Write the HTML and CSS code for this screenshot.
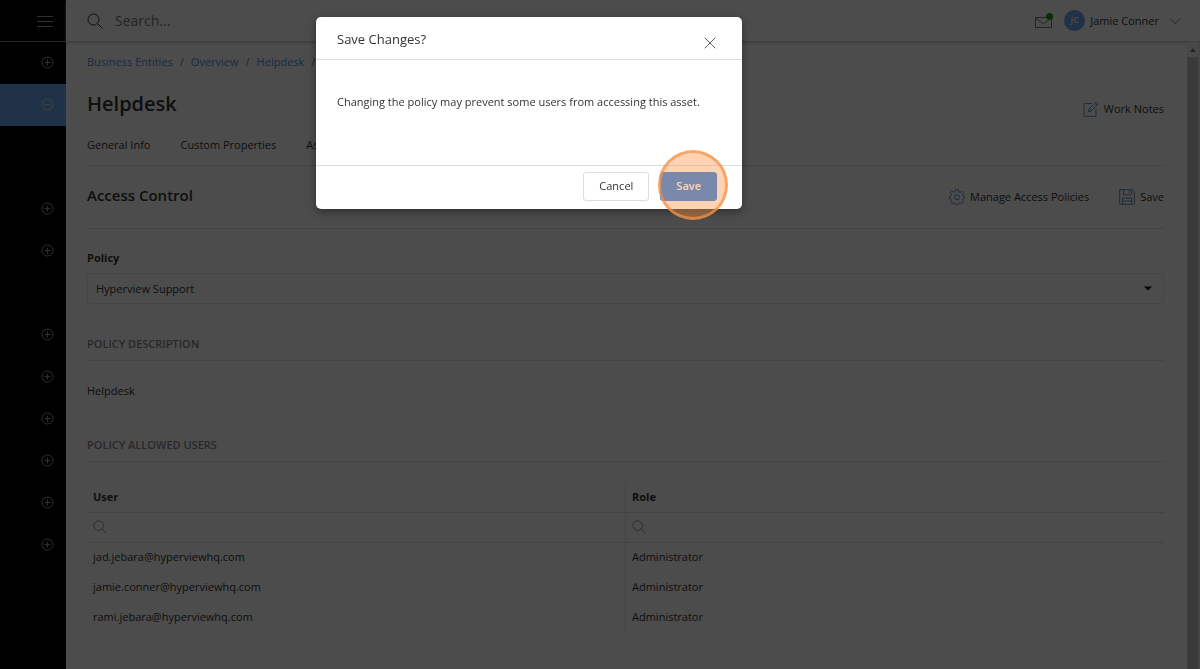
FILE: index.html
```html
<!DOCTYPE html>
<html lang="en">
<head>
<meta charset="utf-8">
<meta name="viewport" content="width=device-width, initial-scale=1">
<title>Helpdesk</title>
<link rel="stylesheet" href="styles.css">
</head>
<body>
<svg class="defs" aria-hidden="true">
  <symbol id="plus" viewBox="0 0 14 14"><circle cx="7.500" cy="6.500" r="5.500"/><path d="M7.500 3.500v6M4.500 6.500h6"/></symbol>
  <symbol id="minus" viewBox="0 0 14 14"><circle cx="7.500" cy="6.500" r="5.500"/><path d="M4.500 6.500h6"/></symbol>
  <symbol id="search" viewBox="0 0 16 16"><circle cx="6.5" cy="6.5" r="5.5"/><path d="M10.500 10.500L15.300 15.300"/></symbol>
</svg>
<div class="app">
  <nav class="sidebar" aria-label="Main">
    <button class="menu" aria-label="Menu"><svg width="16" height="14" viewBox="0 0 16 14"><path d="M0 2.500h16M0 7.500h16M0 12.500h16"/></svg></button>
    <button class="item" aria-label="Expand"><svg class="ring"><use href="#plus"/></svg></button>
    <button class="item active" aria-label="Collapse"><svg class="ring"><use href="#minus"/></svg></button>
    <div class="submenu"></div>
    <button class="item" aria-label="Expand"><svg class="ring"><use href="#plus"/></svg></button>
    <button class="item" aria-label="Expand"><svg class="ring"><use href="#plus"/></svg></button>
    <div class="spacer"></div>
    <button class="item" aria-label="Expand"><svg class="ring"><use href="#plus"/></svg></button>
    <button class="item" aria-label="Expand"><svg class="ring"><use href="#plus"/></svg></button>
    <button class="item" aria-label="Expand"><svg class="ring"><use href="#plus"/></svg></button>
    <button class="item" aria-label="Expand"><svg class="ring"><use href="#plus"/></svg></button>
    <button class="item" aria-label="Expand"><svg class="ring"><use href="#plus"/></svg></button>
    <button class="item" aria-label="Expand"><svg class="ring"><use href="#plus"/></svg></button>
  </nav>
  <div class="page">
    <header class="topbar">
      <svg class="search-icon"><use href="#search"/></svg>
      <input class="search" type="text" placeholder="Search..." aria-label="Search">
      <button class="mail" aria-label="Messages"><svg width="18" height="16" viewBox="0 0 18 16"><path d="M.5 4.500h16v10H.5zM.5 5l8 6 8-6"/><circle cx="14.500" cy="3.500" r="3.500"/></svg></button>
      <button class="account"><span class="avatar">JC</span><span>Jamie Conner</span><svg width="12" height="8" viewBox="0 0 12 8"><path d="M1 1.500l5 5 5-5"/></svg></button>
    </header>
    <div class="view">
      <main class="content">
        <nav class="crumbs" aria-label="Breadcrumb"><a href="#">Business Entities</a><span>/</span><a href="#">Overview</a><span>/</span><a href="#">Helpdesk</a><span>/</span></nav>
        <div class="title-row">
          <h1>Helpdesk</h1>
          <button class="action"><svg width="16" height="16" viewBox="0 0 16 16"><path d="M9 2.500H1v12.800h12V8M5.500 10.800l.8-3L13.300.8l2 2-7 7zM11.800 2.300l2 2M6.300 7.800l2 2"/></svg>Work Notes</button>
        </div>
        <nav class="tabs" aria-label="Sections"><a href="#">General Info</a><a href="#">Custom Properties</a><a href="#">Assets</a></nav>
        <div class="section-row">
          <h2>Access Control</h2>
          <div class="actions">
            <button class="action"><svg width="16" height="16" viewBox="0 0 16 16"><path d="M6.700 .8h2.600l.4 2 1.400.6 1.700-1.200 1.800 1.800-1.200 1.700.6 1.400 1.400.3v2.200l-1.500.4-.6 1.400 1.200 1.700-1.800 1.800-1.700-1.200-1.400.6-.3 1.400H6.700l-.4-1.500-1.400-.6-1.700 1.200-1.800-1.800 1.200-1.700L2 9.900.6 9.600V7.200L2 6.900l.6-1.400L1.400 3.800l1.800-1.800 1.700 1.200 1.400-.6z"/><circle cx="8" cy="8.300" r="2.500"/></svg>Manage Access Policies</button>
            <button class="action"><svg width="16" height="16" viewBox="0 0 16 16"><path d="M.7.700h12.600l2 2v12.600H.7zM4.500.700v5h8v-5M10 2v2M3.500 15.300V9h9v6.300M3.500 12h9"/></svg>Save</button>
          </div>
        </div>
        <label class="field-label" for="policy">Policy</label>
        <div class="select-wrap">
          <select id="policy"><option>Hyperview Support</option></select>
          <svg class="caret" width="8" height="5" viewBox="0 0 8 5"><path d="M0 .5h8L4 4.500z"/></svg>
        </div>
        <h3>POLICY DESCRIPTION</h3>
        <p class="description">Helpdesk</p>
        <h3>POLICY ALLOWED USERS</h3>
        <table>
          <thead>
            <tr><th scope="col">User</th><th scope="col">Role</th></tr>
            <tr class="filters">
              <td><div class="filter"><svg><use href="#search"/></svg><input type="text" aria-label="Filter users"></div></td>
              <td><div class="filter"><svg><use href="#search"/></svg><input type="text" aria-label="Filter roles"></div></td>
            </tr>
          </thead>
          <tbody>
            <tr><td>jad.jebara@hyperviewhq.com</td><td>Administrator</td></tr>
            <tr><td>jamie.conner@hyperviewhq.com</td><td>Administrator</td></tr>
            <tr><td>rami.jebara@hyperviewhq.com</td><td>Administrator</td></tr>
          </tbody>
        </table>
      </main>
      <div class="scrollbar" aria-hidden="true"><svg width="6" height="4" viewBox="0 0 6 4"><path d="M0 4l3-4 3 4z"/></svg><div class="thumb"></div></div>
    </div>
  </div>
</div>
<div class="backdrop"></div>
<div class="modal" role="dialog" aria-modal="true" aria-labelledby="dialog-title">
  <div class="modal-header">
    <div class="modal-title" id="dialog-title">Save Changes?</div>
    <button class="close" aria-label="Close"><svg width="12" height="12" viewBox="0 0 12 12"><path d="M.7.700l10.600 10.600M11.300.700L.7 11.300"/></svg></button>
  </div>
  <div class="modal-body">Changing the policy may prevent some users from accessing this asset.</div>
  <div class="modal-footer">
    <button class="btn">Cancel</button>
    <div class="save-wrap"><button class="btn primary">Save</button><span class="halo"></span></div>
  </div>
</div>
</body>
</html>
```

FILE: styles.css
```css
* { box-sizing: border-box; }
body {
  margin: 0;
  font: 11px/16px "Open Sans", "Noto Sans", sans-serif;
  color: #333;
  background: #fff;
  overflow: hidden;
}
button, input, select { font: inherit; color: inherit; background: none; border: 0; padding: 0; margin: 0; outline: 0; }
h1, h2, h3, p { margin: 0; }
a { color: inherit; text-decoration: none; }
svg { display: block; flex: none; fill: none; stroke: currentColor; }
.defs { position: absolute; width: 0; height: 0; }

.app { display: flex; min-height: 100vh; }
.sidebar { flex: none; width: 66px; background: #000; color: #a0a0a0; display: flex; flex-direction: column; }
.menu { height: 42px; padding-right: 13px; border-bottom: 1px solid #777; display: flex; align-items: center; justify-content: flex-end; }
.item { height: 42px; padding-right: 12px; display: flex; align-items: center; justify-content: flex-end; }
.active { background: #6aa8f0; color: #ddd; }
.ring { width: 14px; height: 14px; }
.submenu { height: 62px; }
.spacer { height: 42px; }

.page { flex: 1; min-width: 0; display: flex; flex-direction: column; }
.topbar { height: 42px; padding: 0 19px 0 21px; display: flex; align-items: center; border-bottom: 1px solid #d0d0d0; box-shadow: 0 1px 2px #ccc; }
.search-icon { width: 16px; height: 16px; }
.search { flex: 1; min-width: 0; margin-left: 12px; font-size: 14px; line-height: 20px; }
.search::placeholder { color: #777; opacity: 1; }
.mail { color: #777; margin-right: 11px; }
.mail circle { fill: #16a51c; stroke: none; }
.account { display: flex; align-items: center; gap: 5px; }
.account svg { margin-left: 5px; color: #777; }
.avatar { width: 21px; height: 21px; border-radius: 50%; background: #6aa8f0; color: #fff; font-size: 9px; font-weight: 600; line-height: 20px; text-align: center; }

.view { flex: 1; display: flex; }
.content { flex: 1; min-width: 0; padding: 12px 23px 0 21px; }
.scrollbar { flex: none; width: 13px; background: #f1f1f1; border-right: 2px solid #e6e6e6; display: flex; flex-direction: column; align-items: center; }
.scrollbar svg { margin: 6px 0 5px; fill: #777; stroke: none; }
.thumb { flex: 1; width: 11px; background: #c1c1c1; }
.crumbs { display: flex; gap: 7px; color: #777; }
.crumbs a { color: #5a8fd0; }
.title-row { display: flex; align-items: center; justify-content: space-between; height: 36px; margin-top: 16px; }
h1 { font-size: 20px; line-height: 28px; font-weight: 600; }
.action { display: flex; align-items: center; gap: 5px; }
.action svg { color: #6a94c8; }
.title-row .action { padding-top: 9px; }
.tabs { display: flex; gap: 30px; padding: 15px 0 12px; border-bottom: 1px solid #e4e4e4; }
.section-row { display: flex; justify-content: space-between; height: 63px; padding: 17px 0 20px; border-bottom: 1px solid #e4e4e4; }
h2 { font-size: 15px; line-height: 24px; font-weight: 600; }
.actions { display: flex; gap: 30px; padding-top: 2px; }
.field-label { display: block; margin-top: 21px; font-weight: 700; }
.select-wrap { position: relative; margin-top: 7px; }
select { display: block; appearance: none; width: 100%; height: 31px; padding: 0 8px; border: 1px solid #e6e6e6; border-radius: 3px; }
.caret { position: absolute; right: 12px; top: 13px; fill: #111; stroke: none; pointer-events: none; }
h3 { font-size: 11px; line-height: 16px; font-weight: 600; color: #888; margin-top: 32px; padding-bottom: 8px; border-bottom: 1px solid #e4e4e4; }
.description { margin-top: 22px; }
.description + h3 { margin-top: 38px; }
table { width: 100%; margin-top: 20px; border-collapse: collapse; table-layout: fixed; }
th, td { height: 30px; padding: 0 6px; text-align: left; }
th, .filters td { border-bottom: 1px solid #e0e0e0; }
th + th, td + td { border-left: 1px solid #e6e6e6; }
th { font-weight: 700; }
.filter { display: flex; align-items: center; gap: 6px; color: #888; }
.filter svg { width: 14px; height: 14px; }
.filter input { flex: 1; min-width: 0; }

.backdrop { position: fixed; inset: 0; background: rgba(0, 0, 0, .7); }
.modal { position: absolute; left: 316px; top: 17px; width: 426px; background: #fff; border-radius: 5px; box-shadow: 0 3px 8px rgba(0, 0, 0, .4); }
.modal-header { display: flex; align-items: center; justify-content: space-between; padding: 12px 26px 10px 21px; border-bottom: 1px solid #ddd; }
.modal-title { font-size: 13px; line-height: 20px; }
.close { padding-top: 8px; color: #666; }
.modal-body { padding: 34px 21px 55px; }
.modal-footer { display: flex; justify-content: flex-end; gap: 11px; padding: 6px 25px 8px; border-top: 1px solid #ddd; }
.btn { height: 29px; padding: 0 15px 1px; border: 1px solid #ddd; border-radius: 3px; }
.save-wrap { position: relative; }
.primary { background: #2582f3; border-color: #2582f3; color: #fff; font-weight: 600; }
.halo { position: absolute; left: -2px; top: -22px; width: 70px; height: 70px; border: 3px solid rgba(242, 147, 70, .7); border-radius: 50%; background: rgba(249, 145, 65, .4); pointer-events: none; }
```
